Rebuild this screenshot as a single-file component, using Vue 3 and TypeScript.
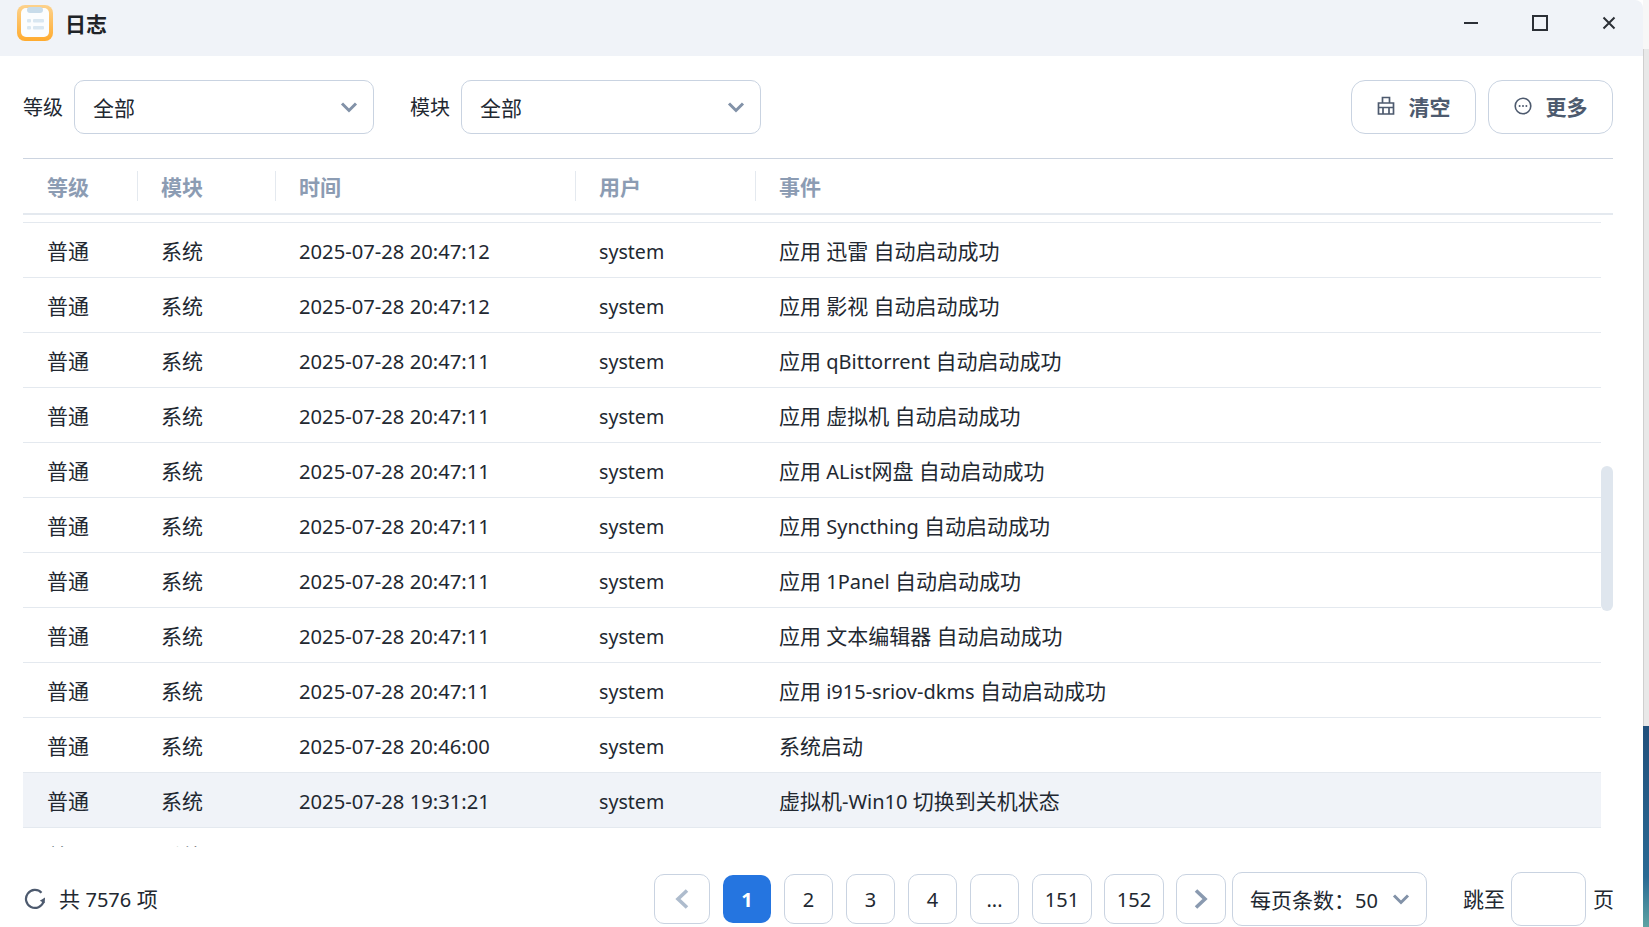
<script setup lang="ts">
interface Row { time: string; user: string; event: string; active?: boolean }

const rows: Row[] = [
  { time: '2025-07-28 20:47:12', user: 'system', event: '应用 迅雷 自动启动成功' },
  { time: '2025-07-28 20:47:12', user: 'system', event: '应用 影视 自动启动成功' },
  { time: '2025-07-28 20:47:11', user: 'system', event: '应用 qBittorrent 自动启动成功' },
  { time: '2025-07-28 20:47:11', user: 'system', event: '应用 虚拟机 自动启动成功' },
  { time: '2025-07-28 20:47:11', user: 'system', event: '应用 AList网盘 自动启动成功' },
  { time: '2025-07-28 20:47:11', user: 'system', event: '应用 Syncthing 自动启动成功' },
  { time: '2025-07-28 20:47:11', user: 'system', event: '应用 1Panel 自动启动成功' },
  { time: '2025-07-28 20:47:11', user: 'system', event: '应用 文本编辑器 自动启动成功' },
  { time: '2025-07-28 20:47:11', user: 'system', event: '应用 i915-sriov-dkms 自动启动成功' },
  { time: '2025-07-28 20:46:00', user: 'system', event: '系统启动' },
  { time: '2025-07-28 19:31:21', user: 'system', event: '虚拟机-Win10 切换到关机状态', active: true },
  { time: '', user: '', event: '' },
]

const columns = ['等级', '模块', '时间', '用户', '事件']

const pages = [
  { label: '1', active: true },
  { label: '2' },
  { label: '3' },
  { label: '4' },
  { label: '...' },
  { label: '151', wide: true },
  { label: '152', wide: true },
]

// Latin runs are set slightly smaller than the CJK runs, as in the reference's font pairing
function segments(text: string): { text: string; latin: boolean }[] {
  return (text.match(/[\x00-\x7f]+|[^\x00-\x7f]+/g) ?? []).map((s) => ({
    text: s,
    latin: /^[\x00-\x7f]/.test(s),
  }))
}
</script>

<template>
  <div class="screen">
    <div class="window">
      <header class="titlebar">
        <svg class="logo" viewBox="0 0 36 36" width="36" height="36">
          <defs>
            <linearGradient id="logoBg" x1="0" y1="0" x2="0" y2="1">
              <stop offset="0" stop-color="#fdd28c" />
              <stop offset="1" stop-color="#ffab2e" />
            </linearGradient>
          </defs>
          <rect width="36" height="36" rx="8" fill="url(#logoBg)" />
          <rect x="4" y="3" width="28" height="29" rx="5" fill="#fbfdfe" />
          <rect x="10" y="2" width="16" height="6" rx="3" fill="#c8dcea" />
          <rect x="10" y="14" width="4" height="3.4" rx="1" fill="#d9e7f1" />
          <rect x="16" y="14" width="11" height="3.4" rx="1" fill="#d9e7f1" />
          <rect x="10" y="21" width="4" height="3.4" rx="1" fill="#d9e7f1" />
          <rect x="16" y="21" width="11" height="3.4" rx="1" fill="#d9e7f1" />
        </svg>
        <span class="title">日志</span>
        <div class="controls">
          <button class="ctl">
            <svg width="16" height="16" viewBox="0 0 16 16"><path d="M1 8h14" stroke="#2b2f36" stroke-width="2" /></svg>
          </button>
          <button class="ctl">
            <svg width="18" height="18" viewBox="0 0 18 18"><rect x="2" y="2" width="14" height="14" fill="none" stroke="#2b2f36" stroke-width="2" /></svg>
          </button>
          <button class="ctl">
            <svg width="16" height="16" viewBox="0 0 16 16"><path d="M2.5 2.5l11 11M13.5 2.5l-11 11" stroke="#2b2f36" stroke-width="2" /></svg>
          </button>
        </div>
      </header>

      <main class="main">
        <div class="toolbar">
          <label class="field-label">等级</label>
          <div class="select filter">
            <span>全部</span>
            <svg class="chev" width="18" height="12" viewBox="0 0 18 12"><path d="M2 2.5l7 7 7-7" fill="none" stroke="#8292a8" stroke-width="3" /></svg>
          </div>
          <label class="field-label second">模块</label>
          <div class="select filter">
            <span>全部</span>
            <svg class="chev" width="18" height="12" viewBox="0 0 18 12"><path d="M2 2.5l7 7 7-7" fill="none" stroke="#8292a8" stroke-width="3" /></svg>
          </div>
          <button class="action push">
            <svg width="18" height="20" viewBox="0 0 18 20" fill="none" stroke="#4d5a6e" stroke-width="1.700">
              <path d="M5.500 7V1.500h7V7M1.500 7h15v11h-15zM1.500 11.500h15M6 11.500V18M12 11.500V18" />
            </svg>
            <span>清空</span>
          </button>
          <button class="action">
            <svg width="18" height="18" viewBox="0 0 18 18">
              <circle cx="9" cy="9" r="7.800" fill="none" stroke="#4d5a6e" stroke-width="1.600" />
              <circle cx="5.600" cy="9" r="1" fill="#4d5a6e" />
              <circle cx="9" cy="9" r="1" fill="#4d5a6e" />
              <circle cx="12.400" cy="9" r="1" fill="#4d5a6e" />
            </svg>
            <span>更多</span>
          </button>
        </div>

        <div class="table-head">
          <div v-for="c in columns" :key="c" class="th">{{ c }}</div>
        </div>

        <div class="table-body">
          <div v-for="(r, i) in rows" :key="i" class="row" :class="{ active: r.active }">
            <div class="td">普通</div>
            <div class="td">系统</div>
            <div class="td time">{{ r.time }}</div>
            <div class="td user">{{ r.user }}</div>
            <div class="td">
              <span v-for="(s, j) in segments(r.event)" :key="j" :class="{ latin: s.latin }">{{ s.text }}</span>
            </div>
          </div>
          <div class="thumb"></div>
        </div>

        <footer class="footer">
          <svg class="refresh" width="22" height="22" viewBox="0 0 22 22" fill="none">
            <path d="M17.500 4.700A9 9 0 1 0 19.600 13.500" stroke="#4d5a6e" stroke-width="2.200" />
            <path d="M21 9.500l-5.200 3.300 4.900 2.500z" fill="#4d5a6e" />
          </svg>
          <span class="total">共 <span class="latin">7576</span> 项</span>

          <div class="pager">
            <button class="page prev">
              <svg width="16" height="22" viewBox="0 0 16 22"><path d="M13 2.500l-9 8.500 9 8.500" fill="none" stroke="#aebccd" stroke-width="3.600" /></svg>
            </button>
            <button
              v-for="p in pages"
              :key="p.label"
              class="page latin"
              :class="{ current: p.active, wide: p.wide }"
            >{{ p.label }}</button>
            <button class="page next">
              <svg width="16" height="22" viewBox="0 0 16 22"><path d="M3 2.500l9 8.500-9 8.500" fill="none" stroke="#8a9ab0" stroke-width="3.600" /></svg>
            </button>
            <div class="select size">
              <span>每页条数：<span class="latin">50</span></span>
              <svg class="chev" width="18" height="12" viewBox="0 0 18 12"><path d="M2 2.500l7 7 7-7" fill="none" stroke="#8292a8" stroke-width="3" /></svg>
            </div>
            <span class="jump">跳至</span>
            <div class="jump-input"></div>
            <span class="jump-end">页</span>
          </div>
        </footer>
      </main>
    </div>
    <div class="desktop">
      <div class="d-top"></div>
      <div class="d-mid"></div>
      <div class="d-wall"></div>
    </div>
  </div>
</template>

<style>
html, body { margin: 0; padding: 0; background: #fff; }
</style>

<style scoped>
.screen {
  display: flex;
  width: 1649px;
  height: 927px;
  overflow: hidden;
  font-family: "Noto Sans", "Noto Sans CJK SC", sans-serif;
  font-size: 21px;
  line-height: 30px;
  color: #222831;
}
.latin { font-size: 20px; }
.window {
  width: 1643px;
  height: 927px;
  display: flex;
  flex-direction: column;
  background: #fff;
  border-top-right-radius: 8px;
  overflow: hidden;
}
.titlebar {
  flex: none;
  height: 56px;
  background: #f0f3f8;
  display: flex;
  align-items: flex-start;
  padding-left: 17px;
}
.logo { margin-top: 5px; }
.title {
  margin: 9px 0 0 12px;
  font-weight: 700;
  color: #1f2328;
}
.controls { margin-left: auto; display: flex; }
.ctl {
  width: 69px;
  height: 46px;
  border: 0;
  background: none;
  padding: 0;
  display: flex;
  align-items: center;
  justify-content: center;
}
.main {
  flex: 1;
  min-height: 0;
  display: flex;
  flex-direction: column;
  padding: 0 30px 1px 23px;
}
.toolbar {
  flex: none;
  display: flex;
  align-items: center;
  height: 54px;
  margin-top: 24px;
}
.field-label {
  flex: none;
  width: 42px;
  margin-right: 9px;
  white-space: nowrap;
  padding-top: 2px;
  font-size: 20px;
}
.field-label.second { margin-left: 36px; }
.select {
  box-sizing: border-box;
  height: 54px;
  border: 1.5px solid #c9d3e1;
  border-radius: 10px;
  display: flex;
  align-items: center;
  justify-content: space-between;
  background: #fff;
}
.select > span { padding-top: 2px; }
.filter { width: 300px; padding: 0 15px 0 18px; }
.action {
  box-sizing: border-box;
  width: 125px;
  height: 54px;
  margin-left: 12px;
  border: 1.5px solid #c9d3e1;
  border-radius: 14px;
  background: #fff;
  display: flex;
  align-items: center;
  justify-content: center;
  gap: 14px;
  font: inherit;
  font-weight: 700;
  color: #4d5a6e;
  padding: 0;
}
.action.push { margin-left: auto; }
.action svg { margin-top: -3px; }

.table-head {
  flex: none;
  margin-top: 24px;
  height: 54px;
  border-top: 1px solid #ccd4e0;
  border-bottom: 2px solid #e4e9ef;
  display: grid;
  grid-template-columns: 114px 138px 300px 180px 1fr;
  align-items: center;
}
.th {
  height: 30px;
  line-height: 32px;
  padding-left: 23px;
  border-left: 1px solid #e4e9ef;
  font-weight: 700;
  color: #8c9cb3;
}
.th:first-child { border-left: 0; padding-left: 24px; }

.table-body {
  flex: 1;
  min-height: 0;
  position: relative;
  overflow: hidden;
  padding: 7px 12px 0 0;
}
.row {
  box-sizing: border-box;
  height: 55px;
  border-bottom: 1px solid #e4e9ef;
  display: grid;
  grid-template-columns: 114px 138px 300px 180px 1fr;
  align-items: center;
}
.row:first-child { height: 56px; border-top: 1px solid #e4e9ef; }
.row.active { background: #f0f3f8; box-shadow: 0 -1px 0 #e4e9ef; }
.td { padding: 2px 0 0 24px; white-space: nowrap; }
.td.time { font-size: 20.200px; }
.td.user { font-size: 19.600px; padding-top: 4px; }
.thumb {
  position: absolute;
  right: 0;
  top: 251px;
  width: 12px;
  height: 145px;
  border-radius: 6px;
  background: #dfe6ee;
}

.footer {
  flex: none;
  height: 54px;
  margin-top: 25px;
  display: flex;
  align-items: center;
}
.refresh { margin-left: 1px; }
.total { margin-left: 13px; }
.pager { margin-left: auto; display: flex; align-items: center; }
.page {
  box-sizing: border-box;
  width: 49px;
  height: 50px;
  margin-right: 13px;
  padding: 0;
  border: 1.5px solid #c9d3e1;
  border-radius: 10px;
  background: #fff;
  display: flex;
  align-items: center;
  justify-content: center;
  font-family: inherit;
  color: #222831;
}
.page.prev { width: 56px; }
.page.wide { width: 60px; margin-right: 12px; }
.page.next { width: 50px; margin-right: 6px; }
.page.current {
  width: 48px;
  height: 48px;
  border: 0;
  background: #2575e0;
  color: #fff;
  font-weight: 700;
}
.size { width: 195px; padding: 0 16px 0 17px; }
.jump { margin-left: 36px; width: 42px; }
.jump-input {
  box-sizing: border-box;
  width: 75px;
  height: 54px;
  margin-left: 6px;
  border: 1.5px solid #c9d3e1;
  border-radius: 10px;
}
.jump-end { margin-left: 7px; width: 20px; }

.desktop { width: 6px; height: 927px; display: flex; flex-direction: column; }
.d-top { height: 49px; background: #f7f7f7; }
.d-mid { height: 677px; background: #e8e8e8; box-shadow: inset 1px 0 0 #cfcfcf; }
.d-wall { flex: 1; background: linear-gradient(#21507c 0%, #2a6a94 75%, #5da3a3 100%); }
</style>
